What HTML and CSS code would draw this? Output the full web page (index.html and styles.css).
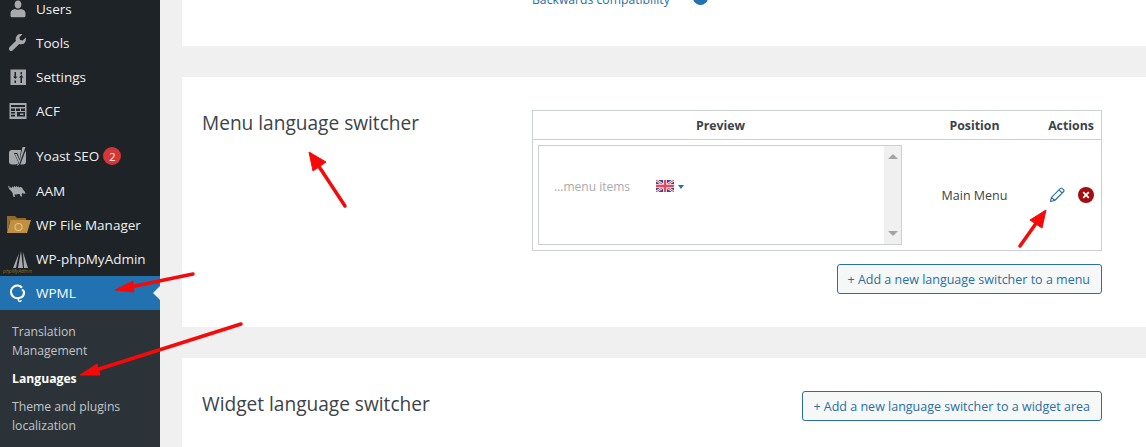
FILE: index.html
```html
<!DOCTYPE html>
<html lang="en">
<head>
    <meta charset="UTF-8">
    <meta name="viewport" content="width=device-width, initial-scale=1.0">
    <title>Languages</title>
    <link rel="stylesheet" href="styles.css">
</head>
<body>
    <div class="sidebar">
        <ul class="menu">
            <li class="menu-item">
                <svg class="menu-icon" viewBox="0 0 20 20"><path d="M10 1.500c2 0 3.400 1.700 3.400 3.900S12 9.600 10 9.600 6.600 7.600 6.600 5.400 8 1.500 10 1.500zM7 10c1.800 1.100 4.200 1.100 6 0 2.300.5 4.500 1.800 4.500 3.900v3.100c0 .8-1 1.300-2 1.300H4.500c-1 0-2-.5-2-1.300v-3.100C2.500 11.800 4.700 10.500 7 10z"/></svg>
                <span>Users</span>
            </li>
            <li class="menu-item">
                <svg class="menu-icon" viewBox="0 0 20 20"><path d="M17.700 4.600l-3 3-2.600-.7-.7-2.600 3-3c-1.800-.6-3.900-.2-5.300 1.200-1.400 1.400-1.800 3.500-1.100 5.300L1.700 14.100c-1 1-1 2.400-.1 3.300.9.900 2.300.9 3.300-.1l6.300-6.300c1.800.7 3.900.3 5.300-1.100 1.400-1.400 1.800-3.500 1.200-5.300z"/></svg>
                <span>Tools</span>
            </li>
            <li class="menu-item">
                <svg class="menu-icon" viewBox="0 0 20 20"><path fill-rule="evenodd" d="M2.500 2.500h15.500v15.500H2.500zM6.500 5v4.500H5L7.250 12 9.500 9.500H8V5zM6.500 13.500V16H8v-2.500zM12.500 5v2.500H14V5zM13.250 8L11 10.500h1.500V16H14v-5.500h1.500z"/></svg>
                <span>Settings</span>
            </li>
            <li class="menu-item">
                <svg class="menu-icon" viewBox="0 0 20 20"><path fill-rule="evenodd" d="M1.500 2h17v16h-17zM3 4v2h14V4zM3 7.500V10h4V7.500zM8 7.500V10h4V7.500zM13 7.500V10h4V7.500zM3 11v1.500h4V11zM3 13.800v1.700h4v-1.700zM9 11v4.500h8V11zM12 12.500h3.500V14H12z"/></svg>
                <span>ACF</span>
            </li>
            <li class="menu-item menu-item-gap">
                <svg class="menu-icon" viewBox="0 0 20 20"><rect x="1" y="3" width="17" height="14.500" rx="3"/><path fill="#1d2327" d="M13.500 0H19l-6.500 17c-.7 1.800-2 2.800-4.500 3v-2.500c1.300-.2 2-.7 2.400-1.700L6 6h3.300l2.400 6.300z"/><path d="M14.500 0h3l-6 16.500c-.5 1.300-1.300 2-2.500 2.300v-1c1-.3 1.700-.9 2-1.800L6.800 7h1.900l3 6.800z"/></svg>
                <span>Yoast SEO</span>
                <span class="badge">2</span>
            </li>
            <li class="menu-item">
                <svg class="menu-icon" viewBox="0 0 20 20"><path d="M0 4.500l1.500 1 .2 2 1-1.800 1 1.500.8-2 1 1.200 1-1.700.8 1.500 1.200-1.500.6 1.500 1.300-1 .6 1.200 1.500-.4 1.500.4 1 2 2 2.600.5 1.500-1.500.2-1.500-.7-.8 1.200.5 2.200h-1.500l-1.200-2.500-3 .3.700 2.200H9.500L8.300 13.500H6.500l.5 2.500H5.500L4.300 11.500 2.700 9.500 1 8z"/></svg>
                <span>AAM</span>
            </li>
            <li class="menu-item">
                <svg class="folder-icon" viewBox="0 0 25 20"><path fill="#8f6a2a" d="M1 1h8l2 2h9v3H4L1 18z"/><path fill="#c18f42" d="M4.500 5H25l-4 13H1z"/><circle cx="12.500" cy="12" r="3.500" fill="none" stroke="#e0c080" stroke-width="1.200"/></svg>
                <span>WP File Manager</span>
            </li>
            <li class="menu-item">
                <svg class="pma-icon" viewBox="0 0 30 24"><path fill="#a7aaad" d="M19 0l2 17h-5zM21 1l5 16h-4zM17 2l-3 15h-3z"/><text class="pma-text" x="1" y="22">phpMyAdmin</text></svg>
                <span>WP-phpMyAdmin</span>
            </li>
            <li class="menu-item menu-item-active">
                <svg class="menu-icon" viewBox="0 0 20 20"><path fill="none" stroke="#fff" stroke-width="2.200" d="M14 4.700A6.300 6.300 0 1 0 11 15c3-.5 5-2.500 5-5.500 0-1.500-1-2.500-2.200-2.500"/><path fill="none" stroke="#fff" stroke-width="1.300" d="M11 15.500c-1 .5-.9 3 .8 3 1 0 1.500-.8 1.200-1.500"/></svg>
                <span>WPML</span>
            </li>
        </ul>
        <ul class="submenu">
            <li>Translation Management</li>
            <li class="submenu-current">Languages</li>
            <li>Theme and plugins localization</li>
        </ul>
    </div>

    <div class="content">
        <div class="panel panel-top">
            <div class="compat">
                <span>Backwards compatibility</span>
                <span class="compat-mark">·</span>
                <span class="help-dot"></span>
            </div>
        </div>

        <div class="panel panel-menu">
            <h2>Menu language switcher</h2>
            <div class="switcher-col">
                <div class="switcher-table">
                    <div class="table-head">
                        <div class="col-preview">Preview</div>
                        <div class="col-position">Position</div>
                        <div class="col-actions">Actions</div>
                    </div>
                    <div class="table-row">
                        <div class="col-preview">
                            <div class="preview-box">
                                <div class="preview-inner">
                                    <span class="preview-text">...menu items</span>
                                    <svg class="flag" viewBox="0 0 18 12">
                                        <rect width="18" height="12" fill="#3b4a8c"/>
                                        <path stroke="#f3eef2" stroke-width="2.400" d="M0 0l18 12M18 0L0 12"/>
                                        <path stroke="#e8475f" stroke-width="1" d="M0 0l18 12M18 0L0 12"/>
                                        <path stroke="#f3eef2" stroke-width="4" d="M9 0v12M0 6h18"/>
                                        <path stroke="#e8475f" stroke-width="2.400" d="M9 0v12M0 6h18"/>
                                    </svg>
                                    <span class="caret"></span>
                                </div>
                                <div class="scrollbar">
                                    <span class="scroll-up"></span>
                                    <span class="scroll-down"></span>
                                </div>
                            </div>
                        </div>
                        <div class="col-position">Main Menu</div>
                        <div class="col-actions action-icons">
                            <svg class="pencil" viewBox="0 0 16 16"><path fill="none" stroke="#2f6f9f" stroke-width="1.100" stroke-linejoin="round" d="M1.500 14.500l1-4.200L11.500 1.300c.5-.5 1-.5 1.500 0L14.700 3c.5.5.5 1 0 1.500L5.700 13.500zM2.500 10.300l3.200 3.200M10 2.800l3.200 3.200"/></svg>
                            <span class="delete-btn">
                                <svg viewBox="0 0 16 16"><circle cx="8" cy="8" r="8" fill="#a30d11"/><path stroke="#fff" stroke-width="1.800" d="M5.200 5.200l5.600 5.600M10.800 5.200l-5.600 5.600"/></svg>
                            </span>
                        </div>
                    </div>
                </div>
                <button class="add-btn">+ Add a new language switcher to a menu</button>
            </div>
        </div>

        <div class="panel panel-widget">
            <h2>Widget language switcher</h2>
            <button class="add-btn">+ Add a new language switcher to a widget area</button>
        </div>
    </div>

    <svg class="arrows" viewBox="0 0 1146 447">
        <g fill="#f50a0a" stroke="#f50a0a">
            <path fill="none" stroke-width="3.500" stroke-linecap="round" d="M345 206L318 165"/>
            <path stroke-width="1" d="M309 152L326 162 313 171z"/>
            <path fill="none" stroke-width="3.500" stroke-linecap="round" d="M1020 246L1037 222"/>
            <path stroke-width="1" d="M1046 210L1042 228 1030 220z"/>
            <path fill="none" stroke-width="3.500" stroke-linecap="round" d="M193 274L130 287"/>
            <path stroke-width="1" d="M115 290L133 281 134 292z"/>
            <path fill="none" stroke-width="3.500" stroke-linecap="round" d="M241 324L96 370"/>
            <path stroke-width="1" d="M80 375L97 364 100 375z"/>
        </g>
    </svg>
</body>
</html>
```

FILE: styles.css
```css
body {
    margin: 0;
    height: 447px;
    overflow: hidden;
    display: flex;
    background-color: #f0f0f1;
    font-family: "Open Sans", "Noto Sans", sans-serif;
    font-size: 12.5px;
    color: #3c434a;
}
ul {
    list-style: none;
    margin: 0;
    padding: 0;
}

/* sidebar */
.sidebar {
    width: 160px;
    flex-shrink: 0;
    background-color: #1d2327;
    color: #f0f0f1;
    display: flex;
    flex-direction: column;
}
.menu {
    margin-top: -8px;
    font-size: 13.5px;
}
.menu-item {
    height: 34px;
    box-sizing: border-box;
    display: flex;
    align-items: center;
    position: relative;
    padding-left: 36px;
}
.menu-item-gap {
    margin-top: 12px;
    padding-bottom: 2px;
}
.menu-icon {
    position: absolute;
    left: 8px;
    top: 7px;
    width: 20px;
    height: 20px;
    fill: #a7aaad;
}
.folder-icon {
    position: absolute;
    left: 6px;
    top: 7px;
    width: 25px;
    height: 20px;
}
.pma-icon {
    position: absolute;
    left: 2px;
    top: 9px;
    width: 30px;
    height: 24px;
}
.pma-text {
    font-size: 5px;
    font-style: italic;
    fill: #8a6d20;
}
.badge {
    margin-left: 4px;
    width: 18px;
    height: 18px;
    border-radius: 50%;
    background-color: #d63638;
    color: #fff;
    font-size: 11px;
    display: flex;
    align-items: center;
    justify-content: center;
}
.menu-item-active {
    background-color: #2271b1;
    color: #fff;
}
.menu-item-active::after {
    content: "";
    position: absolute;
    right: 0;
    top: 10px;
    border: 7px solid transparent;
    border-right-color: #f0f0f1;
    border-left-width: 0;
}
.submenu {
    flex: 1;
    background-color: #2c3338;
    color: #c3c4c7;
    padding: 12px 12px 0;
    font-size: 12.2px;
    line-height: 19px;
}
.submenu li {
    margin-bottom: 9px;
}
.submenu-current {
    color: #fff;
    font-weight: 700;
}

/* content */
.content {
    flex: 1;
    padding-left: 22px;
    display: flex;
    flex-direction: column;
    gap: 31px;
}
.panel {
    background-color: #fff;
    padding: 0 44px 0 20px;
}
.panel h2 {
    margin: 0;
    font-size: 19.1px;
    font-weight: 400;
    color: #3c434a;
}
.panel-top {
    height: 46px;
    display: flex;
    align-items: flex-end;
    padding-left: 350px;
}
.compat {
    height: 54px;
    margin-bottom: 38px;
    display: flex;
    align-items: flex-end;
    gap: 8px;
    font-size: 12.2px;
    color: #2a6fa3;
}
.compat-mark {
    color: #8c8f94;
}
.help-dot {
    width: 15px;
    height: 15px;
    margin: 0 0 3px 4px;
    border-radius: 50%;
    background-color: #2271b1;
}
.panel-menu {
    height: 250px;
    display: flex;
    justify-content: space-between;
    padding-top: 33px;
    box-sizing: border-box;
}
.switcher-col {
    width: 570px;
    display: flex;
    flex-direction: column;
    align-items: flex-end;
    gap: 13px;
}
.switcher-table {
    width: 100%;
    box-sizing: border-box;
    border: 1px solid #ccd0d4;
}
.table-head {
    display: flex;
    height: 28px;
    align-items: center;
    border-bottom: 1px solid #ccd0d4;
    font-size: 12.3px;
    font-weight: 700;
    text-align: center;
}
.table-row {
    display: flex;
    height: 110px;
    align-items: center;
    text-align: center;
}
.col-preview {
    width: 375px;
    box-sizing: border-box;
}
.col-position {
    width: 133px;
}
.col-actions {
    width: 60px;
}
.table-row .col-preview {
    padding-left: 5px;
}
.preview-box {
    width: 364px;
    height: 100px;
    box-sizing: border-box;
    border: 1px solid #ccd0d4;
    display: flex;
}
.preview-inner {
    flex: 1;
    display: flex;
    align-items: flex-start;
    padding: 32px 0 0 15px;
}
.preview-text {
    width: 102px;
    font-size: 12px;
    text-align: left;
    color: #a7aaad;
}
.flag {
    width: 18px;
    height: 12px;
    margin-top: 2px;
}
.caret {
    margin: 7px 0 0 4px;
    border: 3px solid transparent;
    border-top: 4px solid #2271b1;
    border-bottom-width: 0;
}
.scrollbar {
    width: 17px;
    background-color: #f0f0f0;
    display: flex;
    flex-direction: column;
    justify-content: space-between;
    align-items: center;
    padding: 8px 0;
}
.scroll-up,
.scroll-down {
    border: 5px solid transparent;
}
.scroll-up {
    border-bottom: 5px solid #a3a3a3;
    border-top-width: 0;
}
.scroll-down {
    border-top: 5px solid #a3a3a3;
    border-bottom-width: 0;
}
.action-icons {
    display: flex;
    align-items: center;
    justify-content: flex-end;
    gap: 13px;
    padding-right: 7px;
    box-sizing: border-box;
}
.pencil {
    width: 16px;
    height: 16px;
}
.delete-btn {
    display: flex;
}
.delete-btn svg {
    width: 16px;
    height: 16px;
}
.add-btn {
    height: 30px;
    padding: 0 11px 0 10px;
    box-sizing: border-box;
    background-color: #f6f7f7;
    border: 1px solid #2a6fa3;
    border-radius: 3px;
    color: #2a6fa3;
    font-family: inherit;
    font-size: 12.5px;
    white-space: nowrap;
}
.panel-widget {
    flex: 1;
    display: flex;
    justify-content: space-between;
    align-items: flex-start;
    padding-top: 33px;
}

/* annotation arrows drawn over the screenshot */
.arrows {
    position: absolute;
    left: 0;
    top: 0;
    width: 1146px;
    height: 447px;
    pointer-events: none;
}
```
